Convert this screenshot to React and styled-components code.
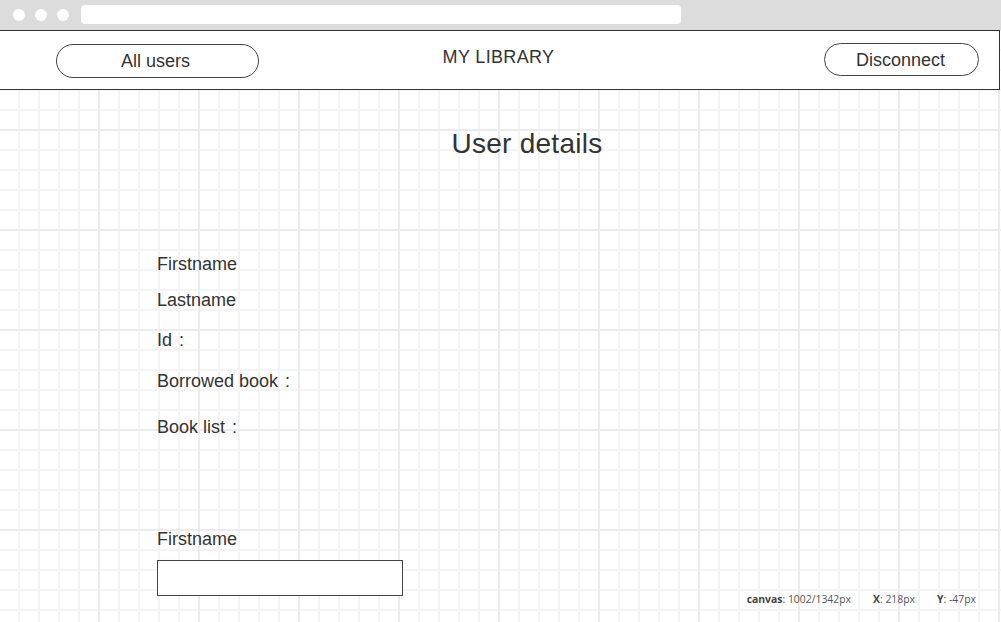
import styled, { createGlobalStyle } from "styled-components";

const Global = createGlobalStyle`
  html, body {
    margin: 0;
    padding: 0;
    height: 100%;
  }
  body {
    font-family: "Liberation Sans", Arial, sans-serif;
    color: #333;
    background-color: #fff;
    background-image:
      linear-gradient(to right, #ebebeb 2px, transparent 2px),
      linear-gradient(to bottom, #ebebeb 2px, transparent 2px),
      linear-gradient(to right, #f4f4f4 2px, transparent 2px),
      linear-gradient(to bottom, #f4f4f4 2px, transparent 2px);
    background-size: 100px 100px, 100px 100px, 20px 20px, 20px 20px;
    background-position: 98px 0, 0 29px, 18px 0, 0 9px;
    overflow: hidden;
  }
`;

const Window = styled.div`
  position: relative;
  display: flex;
  flex-direction: column;
  height: 100vh;
`;

const ChromeBar = styled.div`
  height: 30px;
  box-sizing: border-box;
  background: #dcdcdc;
  display: flex;
  align-items: center;
  padding-left: 13px;
  gap: 10px;
`;

const Dot = styled.span`
  width: 12px;
  height: 12px;
  border-radius: 50%;
  background: #fff;
`;

const UrlBar = styled.div`
  width: 600px;
  height: 19px;
  margin-left: 2px;
  margin-top: -1px;
  border-radius: 4px;
  background: #fff;
`;

const Header = styled.header`
  width: 1000px;
  height: 60px;
  box-sizing: border-box;
  background: #fff;
  border-top: 1px solid #333;
  border-bottom: 1px solid #333;
  border-right: 1px solid #333;
  display: grid;
  grid-template-columns: 1fr auto 1fr;
  align-items: start;
  padding-top: 12px;
`;

const PillButton = styled.button`
  box-sizing: border-box;
  height: ${(p) => p.$h}px;
  width: ${(p) => p.$w}px;
  margin-top: ${(p) => p.$top || 0}px;
  border: 1px solid #444;
  border-radius: 17px;
  background: #fff;
  font-family: "Liberation Sans", Arial, sans-serif;
  font-size: 18px;
  line-height: 1;
  color: #333;
  padding: 0 ${(p) => p.$shift || 0}px 0 0;
  display: flex;
  align-items: center;
  justify-content: center;
`;

const LeftButton = styled(PillButton)`
  justify-self: start;
  margin-left: 56px;
`;

const RightButton = styled(PillButton)`
  justify-self: end;
  margin-right: 20px;
`;

const Brand = styled.div`
  font-size: 18px;
  line-height: 1;
  letter-spacing: 0.35px;
  margin-top: 5px;
  margin-right: 2px;
  color: #333;
`;

const Main = styled.main`
  flex: 1;
  padding-top: 40px;
`;

const Title = styled.h1`
  margin: 0;
  font-weight: normal;
  font-size: 28px;
  line-height: 1;
  letter-spacing: 0.25px;
  text-align: center;
  padding-left: 53px;
  color: #333;
`;

const Details = styled.div`
  display: flex;
  flex-direction: column;
  align-items: flex-start;
  padding-left: 157px;
  margin-top: 97px;
`;

const Label = styled.div`
  font-size: 18px;
  line-height: 1;
  color: #333;
  margin-top: ${(p) => p.$gap || 0}px;
`;

const Colon = styled.span`
  margin-left: 2px;
`;

const TextInput = styled.input`
  box-sizing: border-box;
  width: 246px;
  height: 36px;
  margin-top: 12px;
  border: 1px solid #444;
  border-radius: 0;
  background: #fff;
  padding: 0 6px;
  outline: none;
`;

const Status = styled.div`
  position: absolute;
  right: 25px;
  bottom: 16px;
  display: flex;
  gap: 22px;
  font-family: "Open Sans", "Noto Sans", sans-serif;
  font-size: 10.4px;
  line-height: 14px;
  color: #555;
  b {
    font-weight: bold;
    color: #444;
  }
`;

export default function App() {
  return (
    <>
      <Global />
      <Window>
        <ChromeBar>
          <Dot />
          <Dot />
          <Dot />
          <UrlBar />
        </ChromeBar>
        <Header>
          <LeftButton $w={203} $h={34} $top={1} $shift={4}>All users</LeftButton>
          <Brand>MY LIBRARY</Brand>
          <RightButton $w={155} $h={33} $shift={2}>Disconnect</RightButton>
        </Header>
        <Main>
          <Title>User details</Title>
          <Details>
            <Label>Firstname</Label>
            <Label $gap={18}>Lastname</Label>
            <Label $gap={22}>Id <Colon>:</Colon></Label>
            <Label $gap={23}>Borrowed book <Colon>:</Colon></Label>
            <Label $gap={28}>Book list <Colon>:</Colon></Label>
            <Label $gap={94}>Firstname</Label>
            <TextInput type="text" />
          </Details>
        </Main>
        <Status>
          <span><b>canvas</b>: 1002/1342px</span>
          <span><b>X</b>: 218px</span>
          <span><b>Y</b>: -47px</span>
        </Status>
      </Window>
    </>
  );
}
